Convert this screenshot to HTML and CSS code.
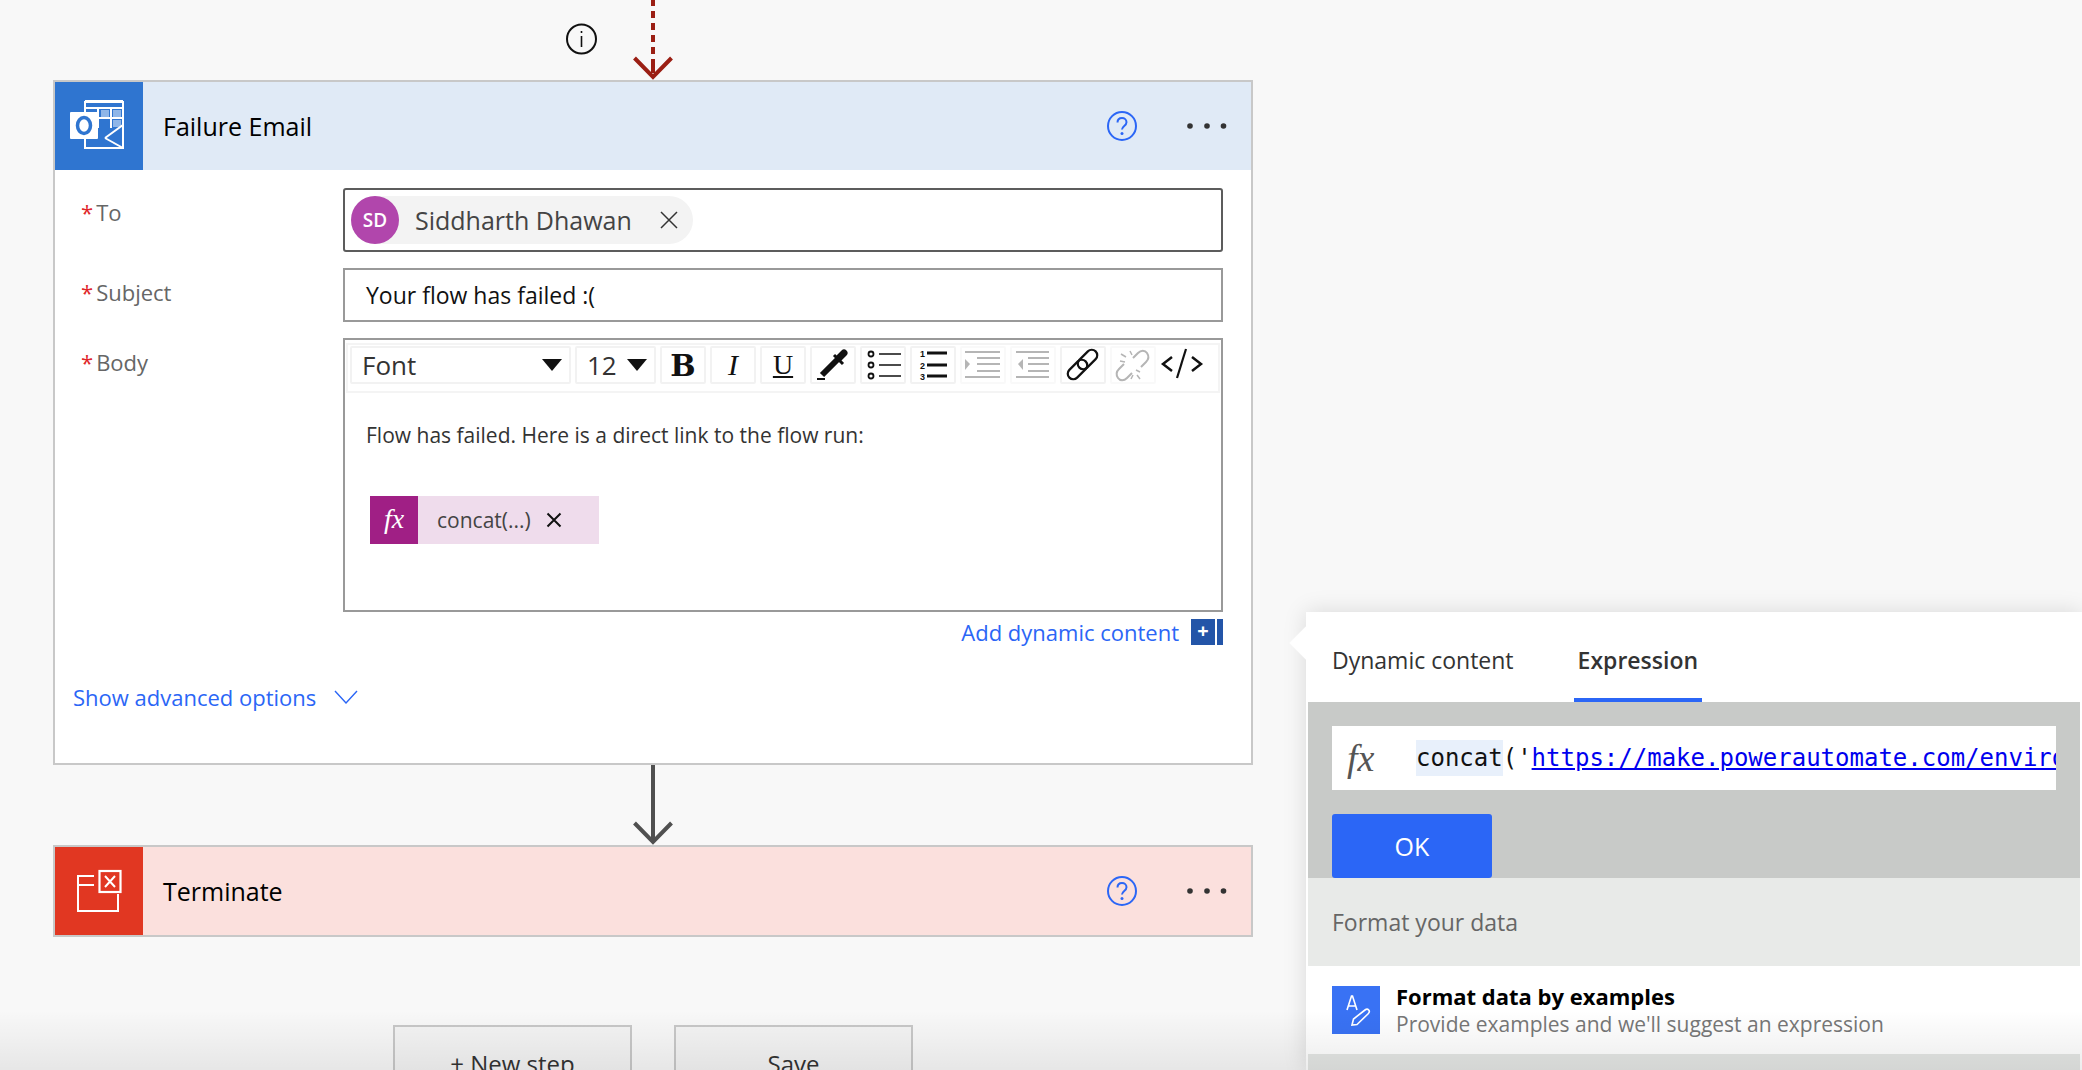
FILE: index.html
```html
<!DOCTYPE html>
<html lang="en">

<head>
    <meta charset="UTF-8">
    <title>Failure Email</title>
    <link rel="stylesheet" href="styles.css">
</head>

<body>
    <div class="canvas">
        <svg class="connector-top" width="1200" height="80" viewBox="0 0 1200 80">
            <circle cx="528.5" cy="39" r="14.5" fill="none" stroke="#111" stroke-width="2"/>
            <path d="M528.5 31v2M528.5 36v11" stroke="#111" stroke-width="1.6"/>
            <path d="M600 0v6M600 11v7M600 23v7M600 35v7M600 47v7M600 59v14" stroke="#9b1f14" stroke-width="4"/>
            <path d="M581.5 58l18.500 19 18.500-19" fill="none" stroke="#9b1f14" stroke-width="4"/>
        </svg>

        <div class="card">
            <div class="card-head">
                <div class="card-icon">
                    <svg width="88" height="88" viewBox="0 0 88 88">
                        <path d="M30 30V20h38v26" fill="none" stroke="#fff" stroke-width="2"/>
                        <path d="M30 26h38M43 26v20M56 26v20M43 36h25M30 19h38" fill="none" stroke="#fff" stroke-width="2"/>
                        <rect x="46" y="28" width="8" height="7" fill="#8fb6e8"/>
                        <rect x="58" y="28" width="8" height="7" fill="#8fb6e8"/>
                        <rect x="58" y="38" width="8" height="7" fill="#8fb6e8"/>
                        <path d="M30 57v9h38V43L50 56" fill="none" stroke="#fff" stroke-width="2"/>
                        <path d="M50 56l18 10" fill="none" stroke="#fff" stroke-width="2"/>
                        <rect x="15" y="30" width="28" height="27" rx="1" fill="#fff"/>
                        <ellipse cx="29" cy="43.500" rx="6.500" ry="8" fill="none" stroke="#2f75d0" stroke-width="3.500"/>
                    </svg>
                </div>
                <div class="card-title">Failure Email</div>
                <svg class="help" width="32" height="32" viewBox="0 0 32 32">
                    <circle cx="16" cy="16" r="14" fill="none" stroke="#2b66f6" stroke-width="2"/>
                    <path d="M11.500 12.500c0-3 2-4.500 4.500-4.500s4.500 1.600 4.500 4.200c0 3.600-4.500 3.800-4.500 7.300" fill="none" stroke="#2b66f6" stroke-width="2"/>
                    <circle cx="16" cy="23.500" r="1.500" fill="#2b66f6"/>
                </svg>
                <svg class="dots" width="42" height="8" viewBox="0 0 42 8">
                    <circle cx="4" cy="4" r="2.800" fill="#333"/>
                    <circle cx="21" cy="4" r="2.800" fill="#333"/>
                    <circle cx="37.500" cy="4" r="2.800" fill="#333"/>
                </svg>
            </div>

            <div class="card-body">
                <div class="field-label field-to"><span class="req">*</span>To</div>
                <div class="people-input">
                    <div class="chip">
                        <span class="avatar">SD</span>
                        <span class="chip-name">Siddharth Dhawan</span>
                        <svg width="20" height="20" viewBox="0 0 20 20">
                            <path d="M2 2l16 16M18 2L2 18" stroke="#333" stroke-width="1.500"/>
                        </svg>
                    </div>
                </div>

                <div class="field-label field-subject"><span class="req">*</span>Subject</div>
                <div class="text-input">Your flow has failed :(</div>

                <div class="field-label field-body"><span class="req">*</span>Body</div>
                <div class="editor">
                    <div class="toolbar">
                        <div class="tool tool-font">Font<span class="caret"></span></div>
                        <div class="tool tool-size">12<span class="caret"></span></div>
                        <div class="tool tool-b">B</div>
                        <div class="tool tool-i">I</div>
                        <div class="tool tool-u">U</div>
                        <div class="tool">
                            <svg width="46" height="38" viewBox="0 0 46 38">
                                <path d="M12 29L28 13" stroke="#111" stroke-width="6"/>
                                <path d="M29 12l5-5" stroke="#111" stroke-width="7" stroke-linecap="round"/>
                                <path d="M24 9l9 9" stroke="#111" stroke-width="3"/>
                                <path d="M7 33h8" stroke="#111" stroke-width="2"/>
                            </svg>
                        </div>
                        <div class="tool">
                            <svg width="46" height="38" viewBox="0 0 46 38">
                                <circle cx="11" cy="8" r="2.500" fill="none" stroke="#111" stroke-width="1.800"/>
                                <circle cx="11" cy="19" r="2.500" fill="none" stroke="#111" stroke-width="1.800"/>
                                <circle cx="11" cy="30" r="2.500" fill="none" stroke="#111" stroke-width="1.800"/>
                                <path d="M19 8h22M19 19h22M19 30h22" stroke="#111" stroke-width="1.600"/>
                            </svg>
                        </div>
                        <div class="tool">
                            <svg width="46" height="38" viewBox="0 0 46 38">
                                <text x="10" y="11" class="list-num">1</text>
                                <text x="10" y="23" class="list-num">2</text>
                                <text x="10" y="34" class="list-num">3</text>
                                <path d="M17 7h20M17 19h20M17 30h20" stroke="#111" stroke-width="3"/>
                            </svg>
                        </div>
                        <div class="tool tool-off">
                            <svg width="46" height="38" viewBox="0 0 46 38">
                                <path d="M5 6h35M17 12h23M17 18h23M17 25h23M5 31h35" stroke="#b5b5b5" stroke-width="2"/>
                                <path d="M5 13l5 5-5 6z" fill="#b5b5b5"/>
                            </svg>
                        </div>
                        <div class="tool tool-off">
                            <svg width="46" height="38" viewBox="0 0 46 38">
                                <path d="M6 6h33M18 12h21M18 18h21M18 25h21M6 31h33" stroke="#b5b5b5" stroke-width="2"/>
                                <path d="M13 13l-5 5 5 6z" fill="#b5b5b5"/>
                            </svg>
                        </div>
                        <div class="tool">
                            <svg width="46" height="38" viewBox="0 0 46 38">
                                <rect x="22" y="2" width="11" height="23" rx="5.500" transform="rotate(45 27.500 13.500)" fill="none" stroke="#111" stroke-width="2.200"/>
                                <rect x="12" y="12" width="11" height="23" rx="5.500" transform="rotate(45 17.500 23.500)" fill="none" stroke="#111" stroke-width="2.200"/>
                            </svg>
                        </div>
                        <div class="tool tool-off">
                            <svg width="46" height="38" viewBox="0 0 46 38">
                                <path d="M23 12l5-5c3-3 7-3 9 0s2 6-1 9l-5 5" fill="none" stroke="#b5b5b5" stroke-width="2"/>
                                <path d="M22 27l-5 5c-3 3-7 3-9 0s-2-6 1-9l5-5" fill="none" stroke="#b5b5b5" stroke-width="2"/>
                                <path d="M20 5l2 4M11 8l5 3M10 15l5 1M26 24l4 2M30 33l-3-4M21 33l2-4" stroke="#b5b5b5" stroke-width="1.500"/>
                            </svg>
                        </div>
                        <div class="tool tool-code">
                            <svg width="44" height="38" viewBox="0 0 44 38">
                                <path d="M12 11l-9 7 9 7M32 11l9 7-9 7" fill="none" stroke="#111" stroke-width="2.500"/>
                                <path d="M26 3L17 32" stroke="#111" stroke-width="2.200"/>
                            </svg>
                        </div>
                    </div>
                    <p class="editor-line">Flow has failed. Here is a direct link to the flow run:</p>
                    <div class="token">
                        <span class="token-fx">fx</span>
                        <span class="token-text">concat(...)</span>
                        <svg width="16" height="16" viewBox="0 0 16 16">
                            <path d="M1.500 1.500l13 13M14.500 1.500l-13 13" stroke="#111" stroke-width="2"/>
                        </svg>
                    </div>
                </div>

                <div class="dynamic-link">
                    <span>Add dynamic content</span>
                    <span class="dynamic-plus">+</span>
                    <span class="dynamic-bar"></span>
                </div>
            </div>

            <div class="advanced">
                <span>Show advanced options</span>
                <svg width="24" height="14" viewBox="0 0 24 14">
                    <path d="M1 1l11 12L23 1" fill="none" stroke="#2b66f6" stroke-width="1.400"/>
                </svg>
            </div>
        </div>

        <svg class="connector" width="1200" height="80" viewBox="0 0 1200 80">
            <path d="M600 0v76" stroke="#505050" stroke-width="4"/>
            <path d="M581.500 58l18.500 19 18.500-19" fill="none" stroke="#505050" stroke-width="4"/>
        </svg>

        <div class="card">
            <div class="card-head head-red">
                <div class="card-icon icon-red">
                    <svg width="88" height="88" viewBox="0 0 88 88">
                        <path d="M39 29H23v35h40V47M23 38h16" fill="none" stroke="#fff" stroke-width="2"/>
                        <rect x="44.500" y="24" width="21" height="21" fill="none" stroke="#fff" stroke-width="2.200"/>
                        <path d="M50 29l10 11M60 29L50 40" stroke="#fff" stroke-width="2"/>
                    </svg>
                </div>
                <div class="card-title">Terminate</div>
                <svg class="help" width="32" height="32" viewBox="0 0 32 32">
                    <circle cx="16" cy="16" r="14" fill="none" stroke="#2b66f6" stroke-width="2"/>
                    <path d="M11.500 12.500c0-3 2-4.500 4.500-4.500s4.500 1.600 4.500 4.200c0 3.600-4.500 3.800-4.500 7.300" fill="none" stroke="#2b66f6" stroke-width="2"/>
                    <circle cx="16" cy="23.500" r="1.500" fill="#2b66f6"/>
                </svg>
                <svg class="dots" width="42" height="8" viewBox="0 0 42 8">
                    <circle cx="4" cy="4" r="2.800" fill="#333"/>
                    <circle cx="21" cy="4" r="2.800" fill="#333"/>
                    <circle cx="37.500" cy="4" r="2.800" fill="#333"/>
                </svg>
            </div>
        </div>

        <div class="actions">
            <button class="action-btn">+ New step</button>
            <button class="action-btn">Save</button>
        </div>
    </div>

    <div class="flyout">
        <div class="flyout-notch"></div>
        <div class="tabs">
            <div class="tab">Dynamic content</div>
            <div class="tab tab-active">Expression</div>
        </div>
        <div class="expr">
            <div class="expr-input">
                <span class="expr-fx">fx</span>
                <div class="expr-code"><span class="expr-fn">concat</span>('<span class="expr-url">https://make.powerautomate.com/environments/</span></div>
            </div>
            <button class="ok-btn">OK</button>
        </div>
        <div class="format-head">Format your data</div>
        <div class="format-row">
            <div class="format-icon">
                <svg width="48" height="48" viewBox="0 0 48 48">
                    <path d="M15 24l4.500-14h1L25 24M16.500 20h7" fill="none" stroke="#fff" stroke-width="1.600"/>
                    <path d="M20 39l1.500-6L33 24c1.500-1.200 3-.8 3.700 0s.8 2.400-.5 3.700L25 38.500z" fill="none" stroke="#fff" stroke-width="1.600"/>
                </svg>
            </div>
            <div>
                <div class="format-title">Format data by examples</div>
                <div class="format-sub">Provide examples and we'll suggest an expression</div>
            </div>
        </div>
        <div class="flyout-rest"></div>
    </div>

    <div class="bottom-fade"></div>
</body>

</html>
```

FILE: styles.css
```css
* {
    box-sizing: border-box;
}

html, body {
    height: 100%;
}

body {
    margin: 0;
    position: relative;
    overflow: hidden;
    background-color: #f8f8f8;
    color: #111;
    font-family: "Open Sans", "Noto Sans", sans-serif;
}

svg {
    display: block;
    flex: none;
}

.canvas {
    width: 1200px;
    margin-left: 53px;
}

.card {
    border: 2px solid #c8c8c8;
    background-color: #fff;
}

.card-head {
    display: flex;
    align-items: center;
    height: 88px;
    background-color: #e0eaf6;
}

.head-red {
    background-color: #fbe0dd;
}

.card-icon {
    flex: none;
    width: 88px;
    height: 88px;
    background-color: #2f75d0;
}

.icon-red {
    background-color: #e13722;
}

.card-title {
    margin-left: 20px;
    font-size: 25px;
    color: #000;
}

.help {
    margin-left: auto;
}

.dots {
    margin-left: 48px;
    margin-right: 23px;
}

.card-body {
    display: grid;
    grid-template-columns: 262px 880px;
    row-gap: 16px;
    padding: 18px 0 0 26px;
}

.field-label {
    font-size: 22px;
    line-height: 30px;
    color: #666;
}

.field-to {
    padding-top: 9px;
}

.field-subject {
    padding-top: 9px;
}

.field-body {
    padding-top: 9px;
}

.req {
    margin-right: 3px;
    color: #e0252a;
}

.people-input {
    height: 64px;
    padding: 6px;
    border: 2px solid #5c5c5c;
    border-radius: 3px;
}

.chip {
    display: inline-flex;
    align-items: center;
    height: 48px;
    padding-right: 14px;
    border-radius: 24px;
    background-color: #f3f3f3;
}

.avatar {
    display: flex;
    align-items: center;
    justify-content: center;
    width: 48px;
    height: 48px;
    border-radius: 50%;
    background-color: #b146ac;
    color: #fff;
    font-size: 19px;
    font-weight: 600;
}

.chip-name {
    margin: 0 27px 0 16px;
    font-size: 25px;
    color: #444;
}

.text-input {
    height: 54px;
    padding-left: 21px;
    border: 2px solid #999;
    font-size: 23px;
    line-height: 50px;
}

.editor {
    height: 274px;
    padding: 3px 1px 0;
    border: 2px solid #999;
}

.toolbar {
    display: flex;
    gap: 4px;
    height: 50px;
    padding: 1px 2px 0;
    border: 2px solid #f4f4f4;
    border-top-width: 2px;
}

.tool {
    display: flex;
    align-items: center;
    justify-content: center;
    width: 46px;
    height: 38px;
    border: 2px solid #f2f2f2;
    border-radius: 2px;
    flex: none;
    font-size: 30px;
}

.tool svg {
    margin: -2px;
}

.tool-off {
    border-color: #f9f9f9;
}

.tool-code {
    border: none;
    width: 44px;
}

.tool-font {
    justify-content: flex-start;
    width: 221px;
    padding-left: 10px;
    font-size: 26px;
    color: #333;
}

.tool-size {
    justify-content: flex-start;
    width: 81px;
    padding-left: 10px;
    font-size: 26px;
    color: #333;
}

.caret {
    width: 0;
    height: 0;
    margin-left: auto;
    margin-right: 7px;
    border-left: 10px solid transparent;
    border-right: 10px solid transparent;
    border-top: 12px solid #111;
}

.tool-b {
    font-family: "DejaVu Serif", serif;
    font-weight: 700;
    color: #111;
}

.tool-i {
    font-family: "Liberation Serif", serif;
    font-style: italic;
}

.tool-u {
    font-family: "Liberation Serif", serif;
    font-size: 28px;
    text-decoration: underline;
}

.list-num {
    font-family: "Liberation Sans", sans-serif;
    font-size: 9px;
    font-weight: 700;
    fill: #111;
}

.editor-line {
    margin: 27px 0 0 20px;
    font-size: 21px;
    line-height: 30px;
    color: #333;
}

.token {
    display: flex;
    align-items: center;
    width: 229px;
    height: 48px;
    margin: 46px 0 0 24px;
    background-color: #efdcec;
}

.token-fx {
    width: 48px;
    height: 48px;
    background-color: #a01f85;
    color: #fff;
    font-family: "Liberation Serif", serif;
    font-size: 28px;
    font-style: italic;
    line-height: 46px;
    text-align: center;
}

.token-text {
    margin: 0 15px 0 19px;
    font-size: 21px;
    color: #444;
}

.dynamic-link {
    grid-column: 2;
    display: flex;
    align-items: center;
    height: 26px;
    margin-top: -9px;
    color: #2b66f6;
    font-size: 22px;
}

.dynamic-link > span:first-child {
    margin-left: auto;
    margin-right: 12px;
}

.dynamic-plus {
    width: 24px;
    height: 26px;
    background-color: #2355a8;
    color: #fff;
    font-size: 20px;
    font-weight: 700;
    line-height: 24px;
    text-align: center;
}

.dynamic-bar {
    width: 6px;
    height: 26px;
    margin-left: 2px;
    background-color: #2355a8;
}

.advanced {
    display: flex;
    align-items: center;
    gap: 18px;
    height: 118px;
    padding: 0 0 14px 18px;
    color: #2b66f6;
    font-size: 22px;
}

.connector {
    display: block;
}

.actions {
    display: flex;
    gap: 42px;
    margin: 88px 0 0 340px;
}

.action-btn {
    flex: none;
    width: 239px;
    height: 64px;
    padding-top: 14px;
    border: 2px solid #c8c8c8;
    background-color: #f4f4f4;
    color: #333;
    font-family: inherit;
    font-size: 24px;
}

/* expression flyout */
.flyout {
    position: absolute;
    top: 612px;
    left: 1306px;
    right: 0;
    bottom: 0;
    display: flex;
    flex-direction: column;
    padding: 0 2px;
    background-color: #fff;
    box-shadow: 0 0 22px rgba(0, 0, 0, 0.13);
}

.flyout-notch {
    position: absolute;
    top: 14px;
    left: -11px;
    width: 34px;
    height: 34px;
    background-color: #fff;
    transform: rotate(45deg) scale(0.95);
}

.tabs {
    position: relative;
    display: flex;
    gap: 64px;
    height: 90px;
    padding-left: 24px;
}

.tab {
    height: 90px;
    padding-top: 30px;
    font-size: 23px;
    line-height: 36px;
    color: #333;
}

.tab-active {
    margin-left: -4px;
    padding: 30px 4px 0;
    border-bottom: 4px solid #2b66f6;
    font-weight: 600;
}

.expr {
    height: 176px;
    padding: 24px 24px 0;
    background-color: #c8cac8;
}

.expr-input {
    display: flex;
    align-items: center;
    height: 64px;
    padding-left: 15px;
    background-color: #fff;
    overflow: hidden;
}

.expr-fx {
    flex: none;
    width: 69px;
    color: #555;
    font-family: "Liberation Serif", serif;
    font-size: 38px;
    font-style: italic;
}

.expr-code {
    font-family: "DejaVu Sans Mono", monospace;
    font-size: 24px;
    line-height: 36px;
    white-space: nowrap;
    color: #111;
}

.expr-fn {
    display: inline-block;
    background-color: #e8f0fb;
}

.expr-url {
    color: #0000ee;
    text-decoration: underline;
}

.ok-btn {
    display: block;
    width: 160px;
    height: 64px;
    margin-top: 24px;
    border: none;
    border-radius: 3px;
    background-color: #2b66f6;
    color: #fff;
    font-family: inherit;
    font-size: 25px;
}

.format-head {
    height: 88px;
    padding: 0 24px;
    background-color: #e8eae8;
    color: #666;
    font-size: 23px;
    line-height: 88px;
}

.format-row {
    display: flex;
    align-items: center;
    gap: 16px;
    height: 88px;
    padding: 0 24px;
}

.format-icon {
    width: 48px;
    height: 48px;
    background-color: #3972f4;
}

.format-title {
    font-size: 22px;
    font-weight: 700;
    line-height: 28px;
    color: #000;
}

.format-sub {
    font-size: 21px;
    line-height: 28px;
    color: #777;
}

.flyout-rest {
    flex: 1;
    background-color: #e4e6e4;
}

.bottom-fade {
    position: absolute;
    left: 0;
    right: 0;
    bottom: 0;
    height: 60px;
    background: linear-gradient(rgba(0, 0, 0, 0), rgba(0, 0, 0, 0.07));
    pointer-events: none;
}
```
